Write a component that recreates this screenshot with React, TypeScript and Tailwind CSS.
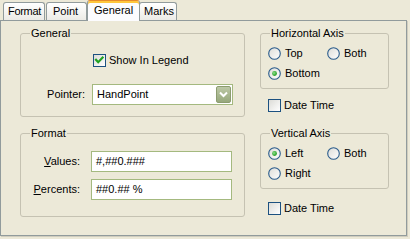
import React from "react";

function CheckBox({ checked }: { checked?: boolean }) {
  return (
    <div className="w-[13px] h-[13px] shrink-0 border border-[#1C5180] bg-linear-to-br from-[#DCDCD7] to-white">
      {checked && (
        <svg width="11" height="11" viewBox="0 0 11 11">
          <polyline points="2,4.8 4.2,7.2 8.6,2.6" fill="none" stroke="#21A121" strokeWidth="2.2" strokeLinecap="square" />
        </svg>
      )}
    </div>
  );
}

function Radio({ checked }: { checked?: boolean }) {
  return (
    <svg width="13" height="13" viewBox="0 0 13 13" className="shrink-0">
      <defs>
        <linearGradient id="rg" x1="0" y1="0" x2="1" y2="1">
          <stop offset="0" stopColor="#DCDCD7" />
          <stop offset="1" stopColor="#FFFFFF" />
        </linearGradient>
        <radialGradient id="dg" cx="0.4" cy="0.4" r="0.6">
          <stop offset="0" stopColor="#8FE28F" />
          <stop offset="1" stopColor="#1C9B1C" />
        </radialGradient>
      </defs>
      <circle cx="6.5" cy="6.5" r="5.8" fill="url(#rg)" stroke="#2B5C8C" strokeWidth="1.1" />
      {checked && <circle cx="6.5" cy="6.5" r="2.4" fill="url(#dg)" />}
    </svg>
  );
}

function Group({ label, className, children }: { label: string; className: string; children: React.ReactNode }) {
  return (
    <div className={"relative border border-[#C5C2B2] rounded-[3px] " + className}>
      <span className="absolute top-[-7px] left-[9px] px-[1px] bg-[#ECE9D8] leading-[13px]">{label}</span>
      {children}
    </div>
  );
}

function RadioItem({ label, checked }: { label: string; checked?: boolean }) {
  return (
    <div className="flex items-center gap-[4px] h-[13px] leading-[13px]">
      <Radio checked={checked} />
      <span>{label}</span>
    </div>
  );
}

function CheckItem({ label, checked, className }: { label: string; checked?: boolean; className?: string }) {
  return (
    <div className={"flex items-center gap-[3px] h-[13px] leading-[13px] " + (className ?? "")}>
      <CheckBox checked={checked} />
      <span>{label}</span>
    </div>
  );
}

export default function App() {
  return (
    <div className="w-[410px] h-[239px] bg-[#ECE9D8] text-[11px] text-black font-['Liberation_Sans',Arial,sans-serif] overflow-hidden">
      {/* Tabs */}
      <div className="flex items-end h-[20px] pl-[3px] whitespace-nowrap">
        <div className="h-[18px] w-[42px] overflow-hidden border border-b-0 border-[#919B9C] rounded-t-[3px] bg-linear-to-b from-white to-[#ECEBE6] pl-[4px] tracking-[-0.3px] leading-[17px]">
          Format
        </div>
        <div className="ml-[1px] h-[18px] w-[41px] border border-b-0 border-[#919B9C] rounded-t-[3px] bg-linear-to-b from-white to-[#ECEBE6] pl-[6px] leading-[17px]">
          Point
        </div>
        <div className="relative z-10 -mb-[1px] h-[21px] w-[53px] border border-b-0 border-[#919B9C] border-t-[#E68B2C] rounded-t-[3px] bg-[#FCFCFE] shadow-[inset_0_2px_0_#FFC73C] pl-[6px] leading-[19px]">
          General
        </div>
        <div className="-ml-[1px] h-[18px] w-[38px] border border-b-0 border-[#919B9C] rounded-t-[3px] bg-linear-to-b from-white to-[#ECEBE6] pl-[4px] leading-[17px]">
          Marks
        </div>
      </div>

      {/* Page */}
      <div className="w-[407px] h-[216px] border border-[#919B9C] bg-[#ECE9D8] shadow-[1px_1px_0_#D0CDBE] flex pl-[19px] pt-[12px]">
        {/* Left column */}
        <div className="w-[225px] flex flex-col gap-[16px]">
          <Group label="General" className="h-[84px] pt-[20px]">
            <CheckItem label="Show In Legend" checked className="ml-[72px]" />
            <div className="mt-[17px] flex items-center">
              <span className="w-[64px] text-right">Pointer:</span>
              <div className="ml-[7px] w-[141px] h-[21px] border border-[#A4B97F] bg-white flex items-center justify-between pl-[4px] pr-[1px]">
                <span>HandPoint</span>
                <div className="w-[15px] h-[17px] rounded-[2px] bg-linear-to-b from-[#BCC8A6] to-[#97A87C] border border-[#8C9C70] flex items-center justify-center">
                  <svg width="9" height="7" viewBox="0 0 9 7">
                    <polyline points="1,1.5 4.5,5 8,1.5" fill="none" stroke="#fff" strokeWidth="2" />
                  </svg>
                </div>
              </div>
            </div>
          </Group>

          <Group label="Format" className="h-[84px] pt-[17px]">
            <div className="flex items-center">
              <span className="w-[59px] text-right">
                <span className="underline">V</span>alues:
              </span>
              <div className="ml-[11px] w-[141px] h-[21px] border border-[#A4B97F] bg-white pl-[4px] leading-[19px]">
                #,##0.###
              </div>
            </div>
            <div className="mt-[7px] flex items-center">
              <span className="w-[59px] text-right">
                <span className="underline">P</span>ercents:
              </span>
              <div className="ml-[11px] w-[141px] h-[21px] border border-[#A4B97F] bg-white pl-[4px] leading-[19px]">
                ##0.## %
              </div>
            </div>
          </Group>
        </div>

        {/* Right column */}
        <div className="ml-[15px] w-[129px] flex flex-col">
          <Group label="Horizontal Axis" className="h-[56px] pt-[13px] pl-[7px]">
            <div className="grid grid-cols-[59px_1fr] gap-y-[7px]">
              <RadioItem label="Top" />
              <RadioItem label="Both" />
              <RadioItem label="Bottom" checked />
            </div>
          </Group>
          <CheckItem label="Date Time" className="mt-[10px] ml-[8px]" />

          <Group label="Vertical Axis" className="mt-[21px] h-[56px] pt-[13px] pl-[7px]">
            <div className="grid grid-cols-[59px_1fr] gap-y-[7px]">
              <RadioItem label="Left" checked />
              <RadioItem label="Both" />
              <RadioItem label="Right" />
            </div>
          </Group>
          <CheckItem label="Date Time" className="mt-[13px] ml-[8px]" />
        </div>
      </div>
    </div>
  );
}
